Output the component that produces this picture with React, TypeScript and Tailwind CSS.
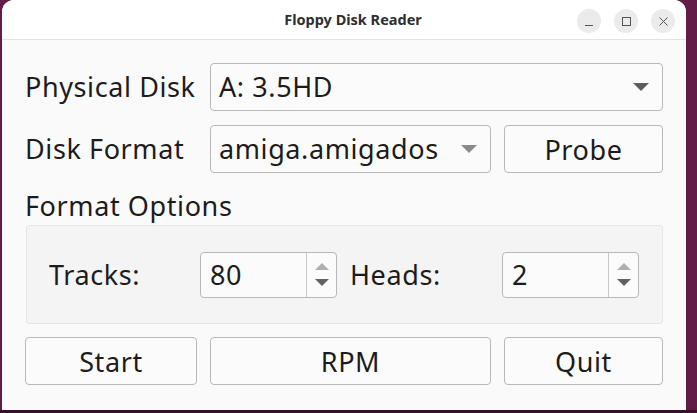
import React from 'react';

const font = { fontFamily: '"Noto Sans", "Open Sans", sans-serif' };

const Arrow = ({ className }: { className: string }) => (
  <svg width="16" height="8" viewBox="0 0 16 8" className={className}>
    <path d="M0 0 L16 0 L8 8 Z" fill="currentColor" />
  </svg>
);

const SpinBox = ({ value }: { value: string }) => (
  <div className="flex h-[46px] w-[137px] rounded-[4px] border border-[#b8b8b8] bg-[#fbfbfb]">
    <div className="flex flex-1 items-center pl-[9px] pt-[1px] text-[27px] tracking-[0.6px] text-[#1c1c1c]">{value}</div>
    <div className="flex w-[30px] flex-col items-center justify-center gap-[9px] border-l border-[#c8c8c8]">
      <svg width="14" height="7" viewBox="0 0 14 7" className="text-[#b0b0b0]">
        <path d="M0 7 L14 7 L7 0 Z" fill="currentColor" />
      </svg>
      <svg width="14" height="7" viewBox="0 0 14 7" className="text-[#626262]">
        <path d="M0 0 L14 0 L7 7 Z" fill="currentColor" />
      </svg>
    </div>
  </div>
);

const Button = ({ label }: { label: string }) => (
  <button className="flex h-[48px] items-center justify-center rounded-[4px] border border-[#b8b8b8] bg-[#fbfbfb] pt-[2px] text-[27px] tracking-[0.6px] text-[#1c1c1c]">
    {label}
  </button>
);

export default function App() {
  return (
    <div className="h-[413px] w-[697px] overflow-hidden bg-[#621c48]" style={font}>
      <div className="ml-[2px] flex h-[410px] w-[684px] flex-col overflow-hidden rounded-t-[12px] bg-[#fafafa]">
        {/* title bar */}
        <div className="relative flex h-[40px] items-center justify-center border-b border-[#e4e4e4] bg-white">
          <span className="ml-[18px] text-[14.5px] font-bold text-[#2e2e2e]">Floppy Disk Reader</span>
          <div className="absolute right-[11px] top-[9px] flex gap-[13px]">
            <div className="flex h-[24px] w-[24px] items-end justify-center rounded-full bg-[#ebebeb] pb-[7px]">
              <div className="h-[1px] w-[8px] bg-[#555]" />
            </div>
            <div className="flex h-[24px] w-[24px] items-center justify-center rounded-full bg-[#ebebeb]">
              <div className="h-[9px] w-[9px] border border-[#555]" />
            </div>
            <div className="flex h-[24px] w-[24px] items-center justify-center rounded-full bg-[#ebebeb]">
              <svg width="9" height="9" viewBox="0 0 9 9">
                <path d="M0.5 0.5 L8.5 8.5 M8.5 0.5 L0.5 8.5" stroke="#555" strokeWidth="1" />
              </svg>
            </div>
          </div>
        </div>

        <div className="flex flex-col px-[23px] pt-[23px] text-[27px] tracking-[0.6px] text-[#1c1c1c]">
          <div className="grid grid-cols-[172px_281px_159px] gap-x-[13px] gap-y-[14px]">
            <div className="flex items-center whitespace-nowrap pt-[1px]">Physical Disk</div>
            <div className="col-span-2 flex h-[48px] items-center justify-between rounded-[4px] border border-[#b8b8b8] bg-[#fbfbfb] pl-[8px] pr-[13px]">
              <span className="pt-[1px]">A: 3.5HD</span>
              <Arrow className="text-[#5e5e5e]" />
            </div>

            <div className="flex items-center whitespace-nowrap pt-[1px]">Disk Format</div>
            <div className="flex h-[48px] items-center justify-between rounded-[4px] border border-[#b8b8b8] bg-[#fbfbfb] pl-[8px] pr-[13px]">
              <span className="pt-[1px]">amiga.amigados</span>
              <Arrow className="text-[#8a8a8a]" />
            </div>
            <Button label="Probe" />
          </div>

          <div className="mt-[14px] flex h-[38px] items-center">Format Options</div>

          <div className="ml-[1px] flex h-[99px] items-center rounded-[3px] border border-[#e6e6e6] bg-[#f4f4f4] pl-[22px]">
            <span className="w-[151px] pt-[1px]">Tracks:</span>
            <SpinBox value="80" />
            <span className="ml-[13px] w-[152px] pt-[1px]">Heads:</span>
            <SpinBox value="2" />
          </div>

          <div className="mt-[13px] grid grid-cols-[172px_281px_159px] gap-x-[13px]">
            <Button label="Start" />
            <Button label="RPM" />
            <Button label="Quit" />
          </div>
        </div>
      </div>
      <div className="h-[3px] bg-[#3a0d2a]" />
    </div>
  );
}
